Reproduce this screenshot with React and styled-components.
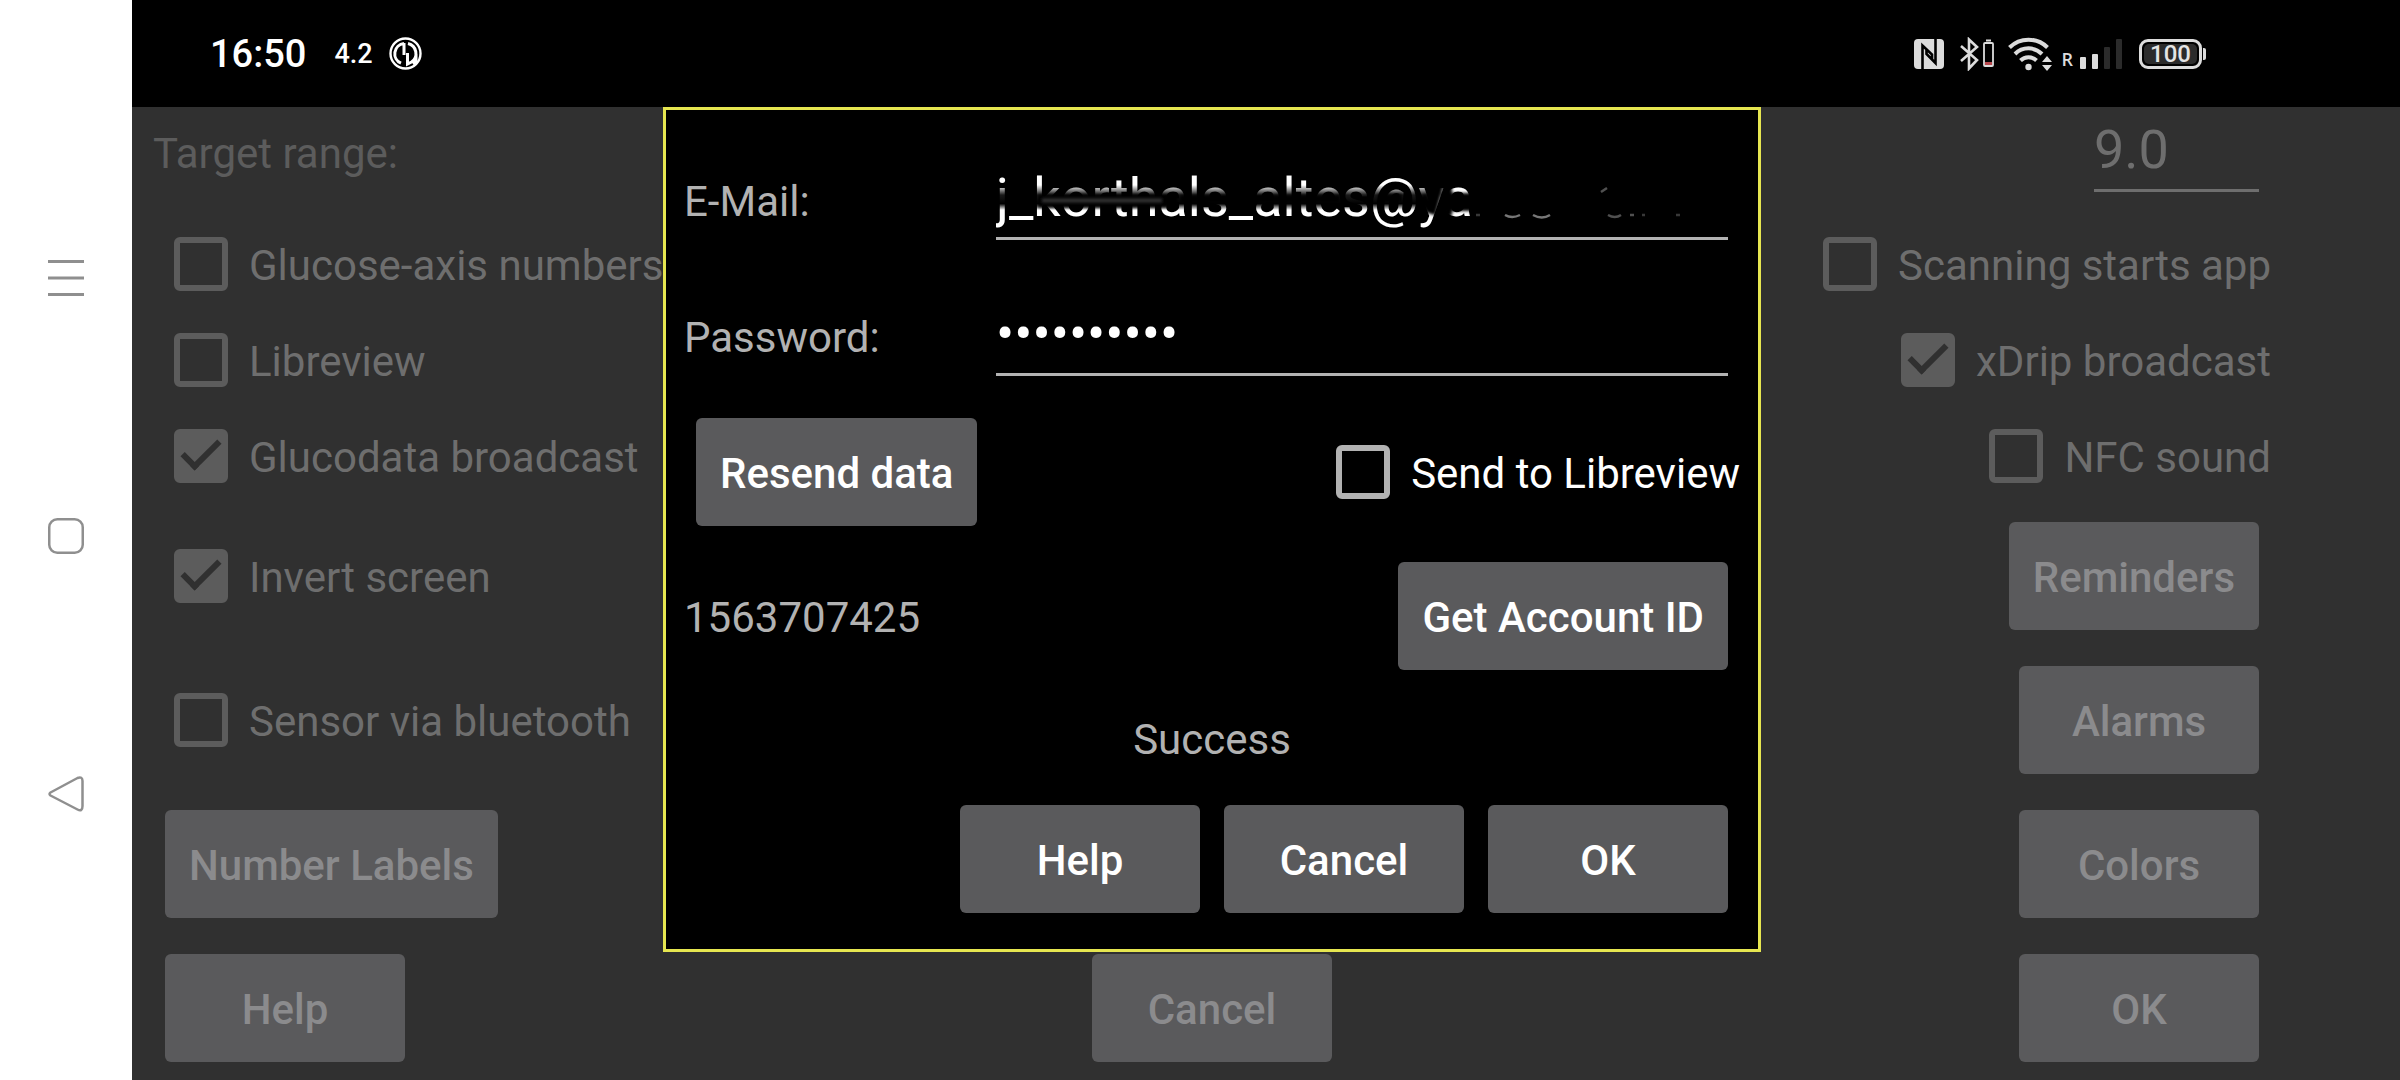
import React from "react";
import styled, { createGlobalStyle } from "styled-components";

const GlobalStyle = createGlobalStyle`
  *, *::before, *::after { box-sizing: border-box; }
  body {
    margin: 0;
    background: #303030;
    font-family: Roboto, "Liberation Sans", sans-serif;
    font-size: 42px;
    line-height: 50px;
  }
  button, input { font: inherit; }
`;

const Screen = styled.div`
  display: flex;
  min-height: 100vh;
`;

/* System navigation rail */
const NavRail = styled.nav`
  flex: none;
  width: 132px;
  padding-bottom: 8px;
  background: #fff;
  display: flex;
  flex-direction: column;
  align-items: center;
  justify-content: center;
  gap: 210px;
`;

const NavButton = styled.button`
  width: 48px;
  height: 48px;
  padding: 0;
  border: 0;
  background: none;
  svg { display: block; }
`;

const Main = styled.div`
  flex: 1;
  display: flex;
  flex-direction: column;
  background: #303030;
`;

/* Status bar */
const StatusBar = styled.header`
  height: 107px;
  background: #000;
  color: #fff;
  display: flex;
  align-items: center;
  justify-content: space-between;
  padding: 0 194px 0 78px;
`;

const StatusGroup = styled.div`
  display: flex;
  align-items: center;
  svg { display: block; flex: none; }
`;

const Clock = styled.time`
  font: 500 38px/48px Roboto, sans-serif;
  margin-right: 28px;
`;

const Reading = styled.span`
  font: 500 27px/36px Roboto, sans-serif;
  margin-right: 16px;
`;

const Roaming = styled.span`
  font: 600 18px/20px "Open Sans", sans-serif;
  color: #dcdcdc;
  align-self: flex-end;
`;

const Signal = styled.div`
  display: flex;
  align-items: center;
  gap: 6px;
  margin: 0 16px 0 8px;
`;

const Battery = styled.div`
  display: flex;
  align-items: center;
  gap: 1px;
  &::after {
    content: "";
    width: 3px;
    height: 12px;
    border-radius: 0 2px 2px 0;
    background: #dcdcdc;
  }
`;

const BatteryShell = styled.div`
  width: 63px;
  height: 30px;
  padding: 2px;
  border: 3px solid #dcdcdc;
  border-radius: 9px;
`;

const BatteryLevel = styled.div`
  height: 20px;
  border-radius: 5px;
  background: #2b2b2b;
  color: #e4e4e4;
  font: 500 24px/20px Roboto, sans-serif;
  text-align: center;
`;

/* Settings page and dialog share the same parts */
const Stage = styled.div`
  flex: 1;
  position: relative;
  margin-right: 108px;
`;

const Settings = styled.main`
  padding: 0 21px;
`;

const Row = styled.div`
  display: flex;
  align-items: center;
  justify-content: space-between;
  min-height: ${(p) => (p.$compact ? 96 : 144)}px;
`;

const RangeRow = styled.div`
  display: flex;
  align-items: baseline;
  justify-content: space-between;
  padding: 11px 12px 24px 0;
`;

const FieldLabel = styled.label`
  color: ${(p) => (p.$dim ? "#5c5c5c" : "#b2b2b2")};
`;

const TextField = styled.input`
  display: block;
  width: ${(p) => (p.$short ? "165px" : "100%")};
  height: 74px;
  padding: 0 0 9px;
  border: 0;
  border-bottom: 3px solid ${(p) => (p.$dim ? "#6e6e6e" : "#b2b2b2")};
  border-radius: 0;
  outline: 0;
  background: transparent;
  color: ${(p) => (p.$dim ? "#6e6e6e" : "#fff")};
  font-size: 54px;
  line-height: 62px;
`;

const Button = styled.button`
  min-width: 240px;
  height: 108px;
  margin: 0 12px;
  padding: 3px 24px 0;
  border: 0;
  border-radius: 6px;
  background: #5a5a5c;
  color: ${(p) => (p.$dim ? "#8b8b8d" : "#fff")};
  font-weight: 500;
`;

const CheckLabel = styled.label`
  display: flex;
  align-items: center;
  color: ${(p) => (p.$dim ? "#6e6e6e" : "#fff")};
  span { padding-top: 3px; white-space: nowrap; }
`;

const CheckBox = styled.input`
  appearance: none;
  flex: none;
  display: block;
  width: 54px;
  height: 54px;
  margin: 0 21px;
  border: 6px solid ${(p) => (p.$dim ? "#5c5c5c" : "#b2b2b2")};
  border-radius: 6px;
  &:checked { background: #5c5c5c; }
  &:checked::after {
    content: "";
    display: block;
    width: 20px;
    height: 38px;
    margin: -4px 0 0 11px;
    border: solid #303030;
    border-width: 0 6px 6px 0;
    transform: rotate(45deg);
  }
`;

const Overlay = styled.div`
  position: absolute;
  inset: 0;
  display: flex;
  align-items: flex-start;
  justify-content: center;
`;

const Dialog = styled.section`
  width: 1098px;
  max-width: 100%;
  padding: 0 18px 18px;
  border: 3px solid #e6e650;
  background: #000;
`;

const Fields = styled.div`
  margin-bottom: 18px;
`;

const FieldRow = styled.div`
  display: grid;
  grid-template-columns: 312px 1fr;
  align-items: baseline;
  padding: 56px 12px 6px 0;
`;

const FieldBox = styled.div`
  position: relative;
`;

const Smudge = styled.svg`
  position: absolute;
  left: -6px;
  top: 0;
  width: calc(100% + 6px);
  height: 68px;
`;

const Note = styled.p`
  margin: 0;
  padding: 3px 0 0;
  color: #b2b2b2;
`;

const Message = styled(Note)`
  padding: 27px 0 22px;
  text-align: center;
`;

const Actions = styled.div`
  display: flex;
  align-items: center;
  justify-content: flex-end;
  min-height: 144px;
`;

function Check({ label, checked, dim }) {
  return (
    <CheckLabel $dim={dim}>
      <CheckBox type="checkbox" defaultChecked={checked} $dim={dim} />
      <span>{label}</span>
    </CheckLabel>
  );
}

const StatusSvg = styled.svg`
  margin-left: ${(p) => p.$gap || 0}px;
`;

function StatusIcons() {
  return (
    <StatusGroup>
      <StatusSvg width="30" height="30" viewBox="0 0 30 30" aria-label="NFC">
        <rect width="30" height="30" rx="4" fill="#dcdcdc" />
        <path d="M8.500 30V6.500L18 15.500v5M21.500 0V24L12.500 15V9.500" fill="none" stroke="#000" strokeWidth="2.600" />
      </StatusSvg>
      <StatusSvg $gap={15} width="36" height="34" viewBox="0 0 36 34" aria-label="Bluetooth">
        <path d="M2 9l16 14-8 8.500V2.500L18 10 2 24" fill="none" stroke="#dcdcdc" strokeWidth="2.600" />
        <rect x="25" y="6" width="9" height="23" rx="1" fill="none" stroke="#dcdcdc" strokeWidth="1.800" />
        <path d="M27 3.500h5" stroke="#dcdcdc" strokeWidth="2" />
        <rect x="26" y="25" width="7" height="3" fill="#b8474c" />
      </StatusSvg>
      <StatusSvg $gap={13} width="46" height="36" viewBox="0 0 46 36" aria-label="Wi-Fi">
        <g fill="none" stroke="#dcdcdc" strokeWidth="4">
          <path d="M1.500 11.500a27 27 0 0 1 38 0" />
          <path d="M7 18a19 19 0 0 1 27 0" />
          <path d="M12.500 24.500a11.500 11.500 0 0 1 16 0" />
        </g>
        <circle cx="20.500" cy="31" r="3.200" fill="#dcdcdc" />
        <path d="M34 26l5-6 5 6zM34 29l5 6 5-6z" fill="#dcdcdc" />
      </StatusSvg>
      <Signal>
        <Roaming>R</Roaming>
        <svg width="44" height="30" viewBox="0 0 44 30" aria-label="Signal">
          <rect x="1" y="18" width="6" height="12" rx="1" fill="#dcdcdc" />
          <rect x="13" y="15" width="6" height="15" rx="1" fill="#dcdcdc" />
          <rect x="25" y="8" width="6" height="22" rx="1" fill="#2b2b2b" />
          <rect x="37" y="0" width="6" height="30" rx="1" fill="#2b2b2b" />
        </svg>
      </Signal>
      <Battery>
        <BatteryShell>
          <BatteryLevel>100</BatteryLevel>
        </BatteryShell>
      </Battery>
    </StatusGroup>
  );
}

/* Scribble that hides the address typed in the e-mail field */
function Scribble() {
  return (
    <Smudge viewBox="0 0 738 68" preserveAspectRatio="none" aria-hidden="true">
      <defs>
        <linearGradient id="band" x1="0" y1="0" x2="0" y2="1">
          <stop offset="0" stopColor="#000" stopOpacity="0" />
          <stop offset="0.4" stopColor="#000" stopOpacity="0.9" />
          <stop offset="0.75" stopColor="#000" />
          <stop offset="1" stopColor="#000" stopOpacity="0" />
        </linearGradient>
        <filter id="soft" filterUnits="userSpaceOnUse" x="0" y="0" width="738" height="68">
          <feGaussianBlur stdDeviation="1.500" />
        </filter>
      </defs>
      <rect x="0" y="19" width="444" height="25" fill="url(#band)" />
      <g fill="none" stroke="#000" filter="url(#soft)">
        <path d="M48 35h140" strokeWidth="13" />
        <path d="M190 33h160M388 32h24" strokeWidth="8" />
        <path d="M432 30l8 14M450 16l-9 32" strokeWidth="9" />
        <path d="M452 36h38" strokeWidth="18" />
        <path d="M458 20v30M485 36v18" strokeWidth="8" />
      </g>
      <path d="M52 34.500h120" stroke="#303034" strokeWidth="4" filter="url(#soft)" />
      <g fill="none" strokeWidth="2.500">
        <path d="M515 49q7 4 15 0M543 49q9 5 17 0" stroke="#777" />
        <path d="M618 49q7 4 13 0M640 49h4M611 26l6-4" stroke="#505050" />
        <path d="M486 49h4M652 49h3M686 49h4" stroke="#383838" />
      </g>
    </Smudge>
  );
}

export default function App() {
  return (
    <>
      <GlobalStyle />
      <Screen>
        <NavRail>
          <NavButton aria-label="Recent apps">
            <svg width="48" height="48" viewBox="0 0 48 48" stroke="#8f8f8f" strokeWidth="3">
              <path d="M6 7.500h36M6 24h36M6 40.500h36" />
            </svg>
          </NavButton>
          <NavButton aria-label="Home">
            <svg width="48" height="48" viewBox="0 0 48 48" fill="none" stroke="#8f8f8f" strokeWidth="2.500">
              <rect x="7.250" y="7.250" width="33.500" height="33.500" rx="8" />
            </svg>
          </NavButton>
          <NavButton aria-label="Back">
            <svg width="48" height="48" viewBox="0 0 48 48" fill="none" stroke="#8f8f8f" strokeWidth="2.500" strokeLinejoin="round">
              <path d="M8.500 22.500 35.500 8Q40.500 6 40.500 11V36Q40.500 42 35.500 39.500L8.500 25.500Q6.500 24 8.500 22.500Z" />
            </svg>
          </NavButton>
        </NavRail>
        <Main>
          <StatusBar>
            <StatusGroup>
              <Clock>16:50</Clock>
              <Reading>4.2</Reading>
              <svg width="33" height="33" viewBox="0 0 33 33" fill="none" stroke="#fff" aria-hidden="true">
                <circle cx="16.500" cy="16.500" r="15" strokeWidth="2.400" />
                <path d="M15 6.500A10.300 10.300 0 0 0 12 26.200M15 6v12" strokeWidth="3" />
                <path d="M19 6.500A10.300 10.300 0 0 1 22.500 25L18.500 27V16M27 17v8l-3 2" strokeWidth="3" />
              </svg>
            </StatusGroup>
            <StatusIcons />
          </StatusBar>
          <Stage>
            <Settings>
              <RangeRow>
                <FieldLabel $dim htmlFor="range">Target range:</FieldLabel>
                <TextField id="range" $dim $short defaultValue="9.0" />
              </RangeRow>
              <Row $compact>
                <Check dim label="Glucose-axis numbers" />
                <Check dim label="Scanning starts app" />
              </Row>
              <Row $compact>
                <Check dim label="Libreview" />
                <Check dim checked label="xDrip broadcast" />
              </Row>
              <Row $compact>
                <Check dim checked label="Glucodata broadcast" />
                <Check dim label="NFC sound" />
              </Row>
              <Row>
                <Check dim checked label="Invert screen" />
                <Button $dim>Reminders</Button>
              </Row>
              <Row>
                <Check dim label="Sensor via bluetooth" />
                <Button $dim>Alarms</Button>
              </Row>
              <Row>
                <Button $dim>Number Labels</Button>
                <Button $dim>Colors</Button>
              </Row>
              <Row>
                <Button $dim>Help</Button>
                <Button $dim>Cancel</Button>
                <Button $dim>OK</Button>
              </Row>
            </Settings>
            <Overlay>
              <Dialog role="dialog" aria-label="Libreview">
                <Fields>
                  <FieldRow>
                    <FieldLabel htmlFor="email">E-Mail:</FieldLabel>
                    <FieldBox>
                      <TextField id="email" defaultValue="j_korthals_altes@ya" />
                      <Scribble />
                    </FieldBox>
                  </FieldRow>
                  <FieldRow>
                    <FieldLabel htmlFor="password">Password:</FieldLabel>
                    <TextField id="password" type="password" defaultValue="0000000000" />
                  </FieldRow>
                </Fields>
                <Row>
                  <Button>Resend data</Button>
                  <Check label="Send to Libreview" />
                </Row>
                <Row>
                  <Note>1563707425</Note>
                  <Button>Get Account ID</Button>
                </Row>
                <Message>Success</Message>
                <Actions>
                  <Button>Help</Button>
                  <Button>Cancel</Button>
                  <Button>OK</Button>
                </Actions>
              </Dialog>
            </Overlay>
          </Stage>
        </Main>
      </Screen>
    </>
  );
}
